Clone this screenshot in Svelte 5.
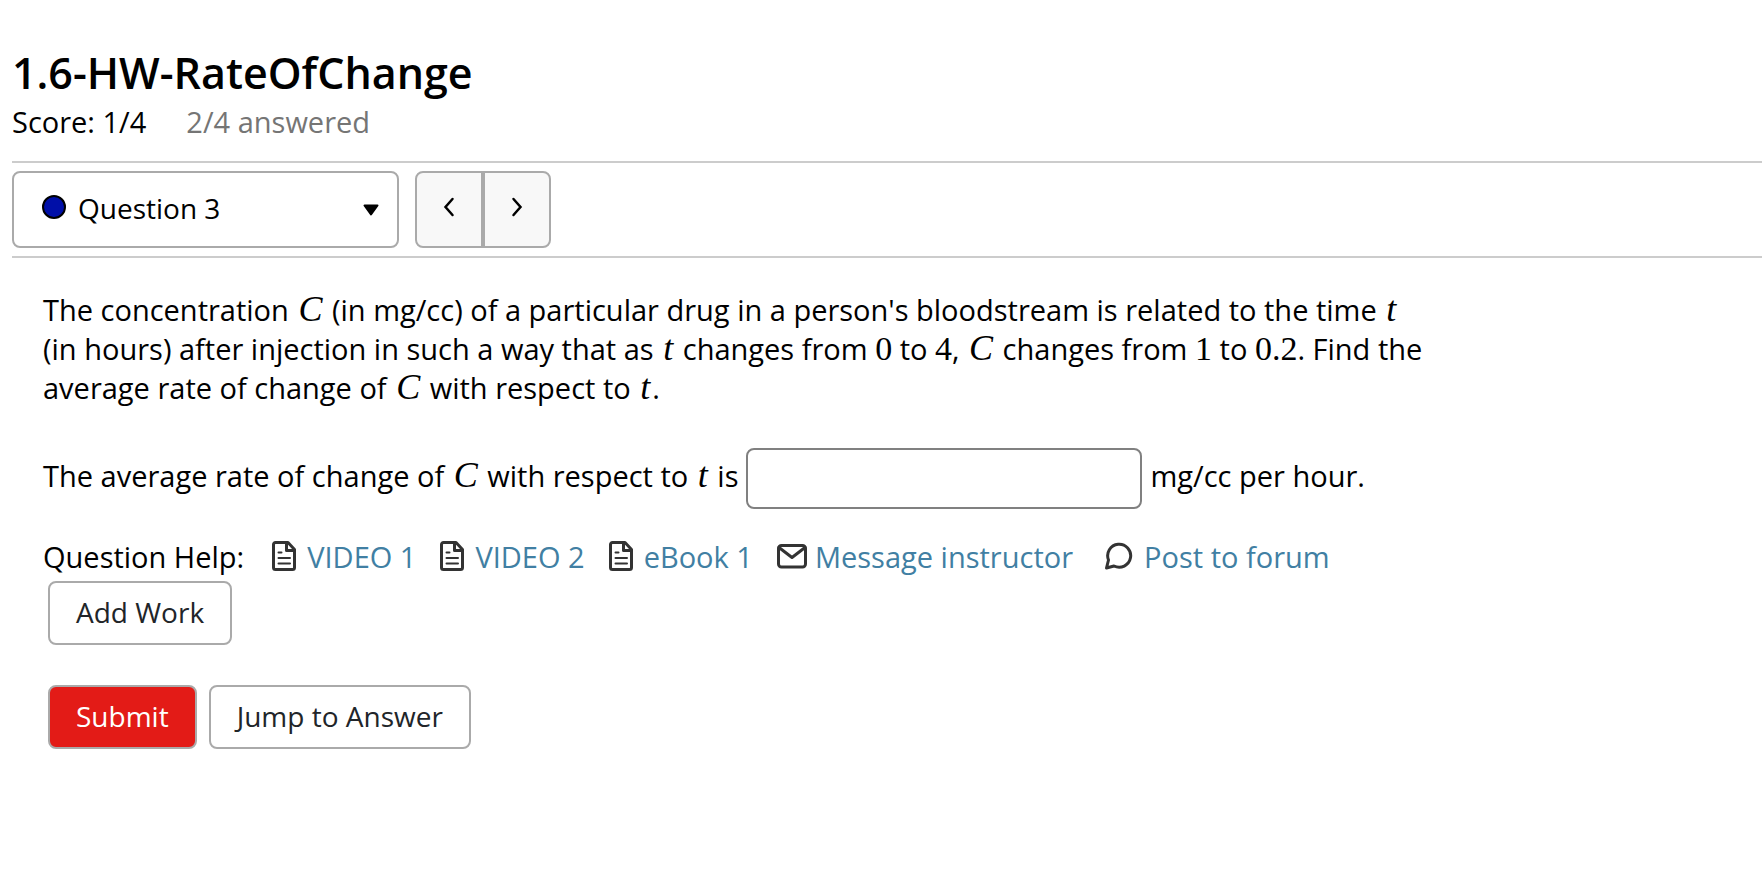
<script>
    let questions = [1, 2, 3, 4];
    let current = $state(3);
    let answer = $state("");

    let helpLinks = [
        { label: "VIDEO 1", icon: "doc" },
        { label: "VIDEO 2", icon: "doc" },
        { label: "eBook 1", icon: "doc" },
        { label: "Message instructor", icon: "mail" },
        { label: "Post to forum", icon: "chat" }
    ];

    function go(step) {
        current = Math.min(questions.length, Math.max(1, current + step));
    }
</script>

<main class="page">
    <header class="heading">
        <h1>1.6-HW-RateOfChange</h1>
        <div class="score">
            <span>Score: 1/4</span>
            <span class="answered">2/4 answered</span>
        </div>
    </header>

    <nav class="toolbar" aria-label="Questions">
        <div class="picker">
            <svg class="dot" viewBox="0 0 24 24" aria-hidden="true">
                <circle cx="12" cy="12" r="11" fill="#000fa8" stroke="#000" stroke-width="2" />
            </svg>
            <select bind:value={current} aria-label="Question">
                {#each questions as q}
                    <option value={q}>Question {q}</option>
                {/each}
            </select>
            <svg class="caret" viewBox="0 0 16 12" aria-hidden="true">
                <path d="M1.500 1.500h13L8 10.500z" stroke="#000" stroke-width="2" stroke-linejoin="round" />
            </svg>
        </div>
        <div class="pager">
            <button type="button" aria-label="Previous question" onclick={() => go(-1)}>
                <svg viewBox="0 0 12 20"><path d="M9.500 2 2.500 10l7 8" /></svg>
            </button>
            <button type="button" aria-label="Next question" onclick={() => go(1)}>
                <svg viewBox="0 0 12 20"><path d="M2.500 2l7 8-7 8" /></svg>
            </button>
        </div>
    </nav>

    <form class="question" onsubmit={(e) => e.preventDefault()}>
        <p>
            The concentration <i>C</i> (in mg/cc) of a particular drug in a person's bloodstream is
            related to the time <i>t</i> (in&nbsp;hours) after injection in such a way that as <i>t</i>
            changes from <b>0</b> to <b>4</b>, <i>C</i> changes from <b>1</b> to <b>0.2</b>. Find the
            average rate of change of <i>C</i> with respect to <i>t</i>.
        </p>

        <div class="answer-row">
            <label for="answer">The average rate of change of <i>C</i> with respect to <i>t</i> is</label>
            <input id="answer" type="text" autocomplete="off" bind:value={answer} />
            <span>mg/cc per hour.</span>
        </div>

        <div class="help">
            <span class="help-title">Question Help:</span>
            {#each helpLinks as link}
                <span class="help-item {link.icon}">
                    {#if link.icon === "doc"}
                        <svg class="icon" viewBox="0 0 24 30" aria-hidden="true">
                            <path d="M3.500 1.500h12.500l6.500 7v18a2 2 0 0 1-2 2h-17a2 2 0 0 1-2-2v-23a2 2 0 0 1 2-2z" />
                            <path d="M14.500 2v7.500h7.500" />
                            <path d="M6.500 11.500h3M6.500 17h11.500M6.500 22.500h11.500" stroke-width="2" />
                        </svg>
                    {:else if link.icon === "mail"}
                        <svg class="icon" viewBox="0 0 30 30" aria-hidden="true">
                            <rect x="1.500" y="4.500" width="27" height="21.500" rx="3" />
                            <path d="M2 6.500l13 10 13-10" />
                        </svg>
                    {:else}
                        <svg class="icon" viewBox="0 0 28 30" aria-hidden="true">
                            <path d="M1.500 27l2-8a11.500 11.500 0 1 1 5.500 6z" />
                        </svg>
                    {/if}
                    <a href="#help">{link.label}</a>
                </span>
            {/each}
        </div>

        <div class="actions">
            <button type="button" class="btn">Add Work</button>
        </div>
        <div class="actions last">
            <button type="submit" class="btn primary">Submit</button>
            <button type="button" class="btn">Jump to Answer</button>
        </div>
    </form>
</main>

<style>
    :global(body) {
        background: #fff;
    }

    .page {
        padding: 45px 0 40px 12px;
        font-family: "Open Sans", "Noto Sans", sans-serif;
        font-size: 29px;
        font-weight: 500;
        line-height: 39px;
        color: #000;
    }

    h1 {
        margin: 0 0 1px;
        font-size: 43px;
        font-weight: 600;
        line-height: 56px;
    }

    .score {
        display: flex;
        gap: 40px;
        padding-bottom: 20px;
    }

    .answered {
        color: #757575;
    }

    .toolbar {
        display: flex;
        gap: 16px;
        padding: 8px 0;
        border-top: 2px solid #ccc;
        border-bottom: 2px solid #ccc;
    }

    .picker {
        display: grid;
        grid-template-columns: 54px 1fr 34px;
        align-items: center;
        box-sizing: border-box;
        width: 387px;
        height: 77px;
        border: 2px solid #aaa;
        border-radius: 8px;
    }

    .picker > * {
        grid-row: 1;
    }

    .dot {
        grid-column: 1;
        width: 24px;
        height: 24px;
        justify-self: end;
        margin-right: 2px;
        margin-bottom: 6px;
    }

    .picker select {
        grid-column: 1 / -1;
        height: 100%;
        padding: 0 46px 2px 64px;
        border: 0;
        appearance: none;
        background: transparent;
        font: inherit;
        font-size: 28px;
        color: inherit;
    }

    .caret {
        grid-column: 3;
        width: 16px;
        height: 12px;
        pointer-events: none;
    }

    .pager {
        display: flex;
    }

    .pager button {
        width: 68px;
        padding: 0 0 2px;
        border: 2px solid #aaa;
        background: #f8f8f8;
    }

    .pager button:first-child {
        border-radius: 8px 0 0 8px;
    }

    .pager button:last-child {
        border-radius: 0 8px 8px 0;
    }

    .pager svg {
        width: 12px;
        height: 20px;
        fill: none;
        stroke: #000;
        stroke-width: 2.5;
        stroke-linecap: round;
    }

    .question {
        padding: 32px 32px 0 31px;
    }

    p {
        max-width: 1400px;
        margin: 0 0 41px;
    }

    i,
    b {
        font-family: "Liberation Serif", serif;
        font-size: 34px;
        font-weight: 400;
        line-height: 34px;
    }

    i {
        padding: 0 2px;
        font-size: 36px;
    }

    .answer-row {
        display: flex;
        align-items: center;
        gap: 8px;
        margin-bottom: 28px;
    }

    .answer-row label,
    .answer-row span {
        padding-bottom: 6px;
    }

    .answer-row input {
        box-sizing: border-box;
        width: 396px;
        height: 61px;
        padding: 8px 12px;
        border: 2px solid #808080;
        border-radius: 8px;
        font: inherit;
    }

    .help {
        display: flex;
        align-items: center;
    }

    .help-title {
        margin-right: 28px;
    }

    .help-item {
        display: flex;
        align-items: center;
        gap: 11px;
        margin-right: 24px;
    }

    .help-item.mail {
        gap: 8px;
        margin-right: 32px;
    }

    .icon {
        height: 30px;
        margin-bottom: 2px;
        fill: none;
        stroke: #333;
        stroke-width: 3;
        stroke-linecap: round;
        stroke-linejoin: round;
    }

    a {
        color: #417fa3;
        text-decoration: none;
    }

    .actions {
        display: flex;
        gap: 12px;
        padding-left: 5px;
        margin-top: 5px;
    }

    .actions.last {
        margin-top: 40px;
    }

    .btn {
        height: 64px;
        padding: 0 26px 2px;
        border: 2px solid #aaa;
        border-radius: 8px;
        background: #fff;
        font: inherit;
        font-size: 28px;
        color: #212529;
    }

    .btn.primary {
        background: #e31b17;
        color: #fff;
    }
</style>
